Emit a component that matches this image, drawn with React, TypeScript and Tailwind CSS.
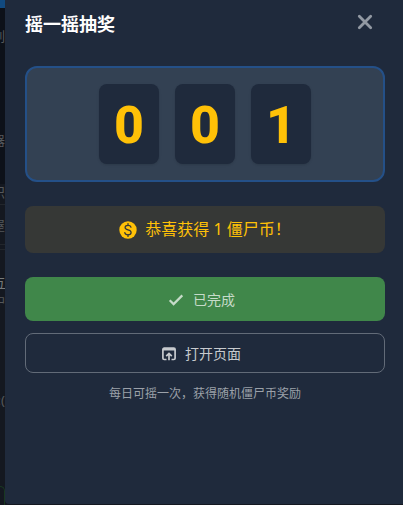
const digits = ["0", "0", "1"];

function CloseIcon() {
  return (
    <svg width="24" height="24" viewBox="0 0 24 24" fill="none" stroke="currentColor" strokeWidth="2.8" strokeLinecap="round" aria-hidden="true">
      <path d="M6.3 6.3 17.7 17.7M17.7 6.3 6.3 17.7" />
    </svg>
  );
}

function CoinIcon() {
  return (
    <svg width="18" height="18" viewBox="0 0 18 18" aria-hidden="true">
      <circle cx="9" cy="9" r="8.7" fill="currentColor" />
      <path
        d="M12 6.2C11.6 4.9 10.5 4.3 9 4.3c-1.7 0-2.9.8-2.9 2.2 0 3.2 6 1.7 6 5 0 1.5-1.3 2.3-3.1 2.3-1.7 0-2.9-.8-3.2-2.2M9 2.6v1.7M9 13.7V15.4"
        fill="none"
        stroke="#363836"
        strokeWidth="1.3"
        strokeLinecap="round"
      />
    </svg>
  );
}

function CheckIcon() {
  return (
    <svg width="18" height="18" viewBox="0 0 18 18" fill="none" stroke="currentColor" strokeWidth="2.2" aria-hidden="true">
      <path d="M2.7 9.3 6.6 13.1 15.3 4.4" />
    </svg>
  );
}

function OpenInBrowserIcon() {
  return (
    <svg width="16" height="16" viewBox="0 0 16 16" fill="none" stroke="currentColor" strokeWidth="1.7" aria-hidden="true">
      <path d="M5.5 13.5H3.2a1.3 1.3 0 0 1-1.3-1.3V3.4a1.3 1.3 0 0 1 1.3-1.3h9.6a1.3 1.3 0 0 1 1.3 1.3v8.8a1.3 1.3 0 0 1-1.3 1.3h-2.3" />
      <path d="M1.9 3.4h12.2" strokeWidth="2.2" />
      <path d="M8 14.2V7.7M5.2 10.2 8 7.4l2.8 2.8" />
    </svg>
  );
}

function Backdrop() {
  return (
    <div
      aria-hidden="true"
      className="flex w-[5px] shrink-0 flex-col items-end overflow-hidden bg-[#141820] text-[13px] leading-4 whitespace-nowrap text-[#55585c]"
    >
      <div className="h-2 w-full shrink-0 bg-[#114a80]" />
      <div className="flex h-[116px] w-full shrink-0 justify-end bg-[#0d1119] pt-5">列</div>
      <div className="flex h-[60px] w-full shrink-0 justify-end bg-[#0d1119] pt-2">器</div>
      <div className="flex h-5 w-full shrink-0 justify-end">识</div>
      <div className="flex h-[41px] w-full shrink-0 justify-end border-y border-[#22262c] pt-3">屋</div>
      <div className="mt-1 flex h-[127px] w-full shrink-0 flex-col items-end gap-1 border-t border-[#22262c] pt-6">
        <span className="text-sm leading-4 text-[#777a7c] underline">方</span>
        <span className="text-xs leading-4">中</span>
      </div>
      <div className="flex h-[110px] w-full shrink-0 justify-end pt-4">:(</div>
      <div className="w-full grow rounded-tr-md border-t border-r border-[#193822]" />
    </div>
  );
}

export default function App() {
  return (
    <div className="flex min-h-screen bg-[#141820] font-['Noto_Sans','Noto_Sans_CJK_SC',sans-serif]">
      <Backdrop />
      <main
        role="dialog"
        aria-labelledby="shake-title"
        className="mb-px flex min-w-0 flex-1 flex-col rounded-bl bg-[#1f2a3c] pr-[18px] pl-5"
      >
        <header className="flex h-11 items-center justify-between pr-2">
          <h1 id="shake-title" className="pt-1 text-lg leading-6 font-bold text-white">
            摇一摇抽奖
          </h1>
          <button type="button" aria-label="关闭" className="text-[#9299a3]">
            <CloseIcon />
          </button>
        </header>

        <section className="mt-[22px] flex justify-center gap-4 rounded-xl border-2 border-[#245088] bg-[#334153] p-4">
          {digits.map((digit, index) => (
            <div
              key={index}
              className="flex h-20 w-[60px] items-center justify-center rounded-lg bg-[#1f2a3c] pt-1 font-['Roboto',sans-serif] text-[52px] leading-none font-extrabold text-[#ffc107] shadow-sm"
            >
              {digit}
            </div>
          ))}
        </section>

        <p className="mt-6 flex items-center justify-center gap-2 rounded-lg bg-[#363836] py-3 text-base leading-[23px] text-[#ffc107]">
          <CoinIcon />
          恭喜获得 1 僵尸币！
        </p>

        <button
          type="button"
          disabled
          className="mt-6 flex h-11 items-center justify-center gap-2 rounded-lg bg-[#40874a] pt-px pr-2 text-sm text-[#c6dbc9]"
        >
          <CheckIcon />
          已完成
        </button>
        <button
          type="button"
          className="mt-3 flex h-10 items-center justify-center gap-2 rounded-lg border border-[#626b78] pt-px pr-2 text-sm text-[#c7cace]"
        >
          <OpenInBrowserIcon />
          打开页面
        </button>

        <p className="mt-3 text-center text-xs leading-[18px] text-[#9ba1a9]">
          每日可摇一次，获得随机僵尸币奖励
        </p>
      </main>
    </div>
  );
}
